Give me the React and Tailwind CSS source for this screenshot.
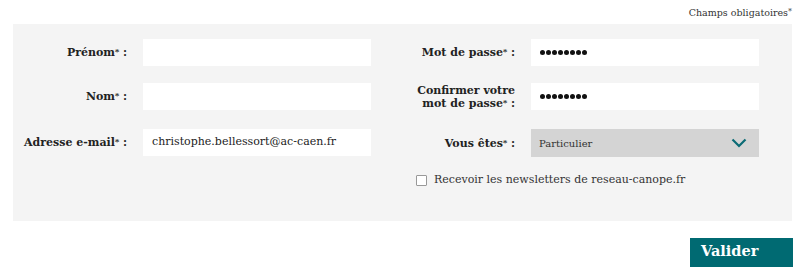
export default function App() {
  const font = { fontFamily: '"DejaVu Serif", serif' };
  const Star = () => <span className="text-[8px] leading-none relative top-[-2px]">*</span>;
  const Label = ({ children, w }) => (
    <div className={`${w} shrink-0 text-right text-[11px] font-bold leading-[13px] text-[#222]`}>{children}</div>
  );
  const Input = ({ children, className = "" }) => (
    <div className={`w-[228px] h-[27px] shrink-0 bg-white flex items-center px-[9px] text-[11px] text-[#222] ${className}`}>{children}</div>
  );
  const dots = (
    <div className="flex gap-[1px]">
      {Array.from({ length: 8 }).map((_, i) => (
        <span key={i} className="block w-[5px] h-[5px] rounded-full bg-[#111]" />
      ))}
    </div>
  );
  return (
    <div className="w-[800px] h-[275px] bg-white relative" style={font}>
      <div className="h-[24px] flex items-start justify-end pr-[8px] pt-[6px] text-[9.5px] text-[#333] leading-[14px]">
        <span>Champs obligatoires<Star /></span>
      </div>
      <div className="ml-[13px] w-[779px] h-[197px] bg-[#f4f4f4] pt-[15px] flex">
        <div className="w-[358px] flex flex-col">
          <div className="flex items-center h-[27px]">
            <Label w="w-[114px]">Prénom<Star /> :</Label>
            <Input className="ml-[16px]" />
          </div>
          <div className="flex items-center h-[27px] mt-[17px]">
            <Label w="w-[114px]">Nom<Star /> :</Label>
            <Input className="ml-[16px]" />
          </div>
          <div className="flex items-center h-[27px] mt-[19px]">
            <Label w="w-[114px]">Adresse e-mail<Star /> :</Label>
            <Input className="ml-[16px]">christophe.bellessort@ac-caen.fr</Input>
          </div>
        </div>
        <div className="ml-[29px] flex flex-col">
          <div className="flex items-center h-[27px]">
            <Label w="w-[115px]">Mot de passe<Star /> :</Label>
            <Input className="ml-[16px]">{dots}</Input>
          </div>
          <div className="flex items-center h-[27px] mt-[17px]">
            <Label w="w-[115px]">Confirmer votre<br />mot de passe<Star /> :</Label>
            <Input className="ml-[16px]">{dots}</Input>
          </div>
          <div className="flex items-center h-[28px] mt-[19px]">
            <Label w="w-[115px]">Vous êtes<Star /> :</Label>
            <div className="ml-[16px] w-[228px] h-[28px] bg-[#d4d4d4] flex items-center justify-between pl-[8px] pr-[12px] text-[10px] text-[#333]">
              <span>Particulier</span>
              <svg width="16" height="10" viewBox="0 0 16 10">
                <path d="M1.5 1.5 L8 8 L14.5 1.5" fill="none" stroke="#0b6b75" strokeWidth="2.2" />
              </svg>
            </div>
          </div>
          <div className="flex items-center mt-[15px] ml-[16px]">
            <span className="block w-[11px] h-[11px] bg-white border border-[#999] rounded-[1px]" />
            <span className="ml-[7px] text-[11px] text-[#333]">Recevoir les newsletters de reseau-canope.fr</span>
          </div>
        </div>
      </div>
      <div className="flex justify-end pr-[7px] mt-[17px]">
        <div className="w-[103px] h-[29px] bg-[#006a72] text-white text-[14.5px] font-bold flex items-center pl-[11px] pb-[3px]">Valider</div>
      </div>
    </div>
  );
}
